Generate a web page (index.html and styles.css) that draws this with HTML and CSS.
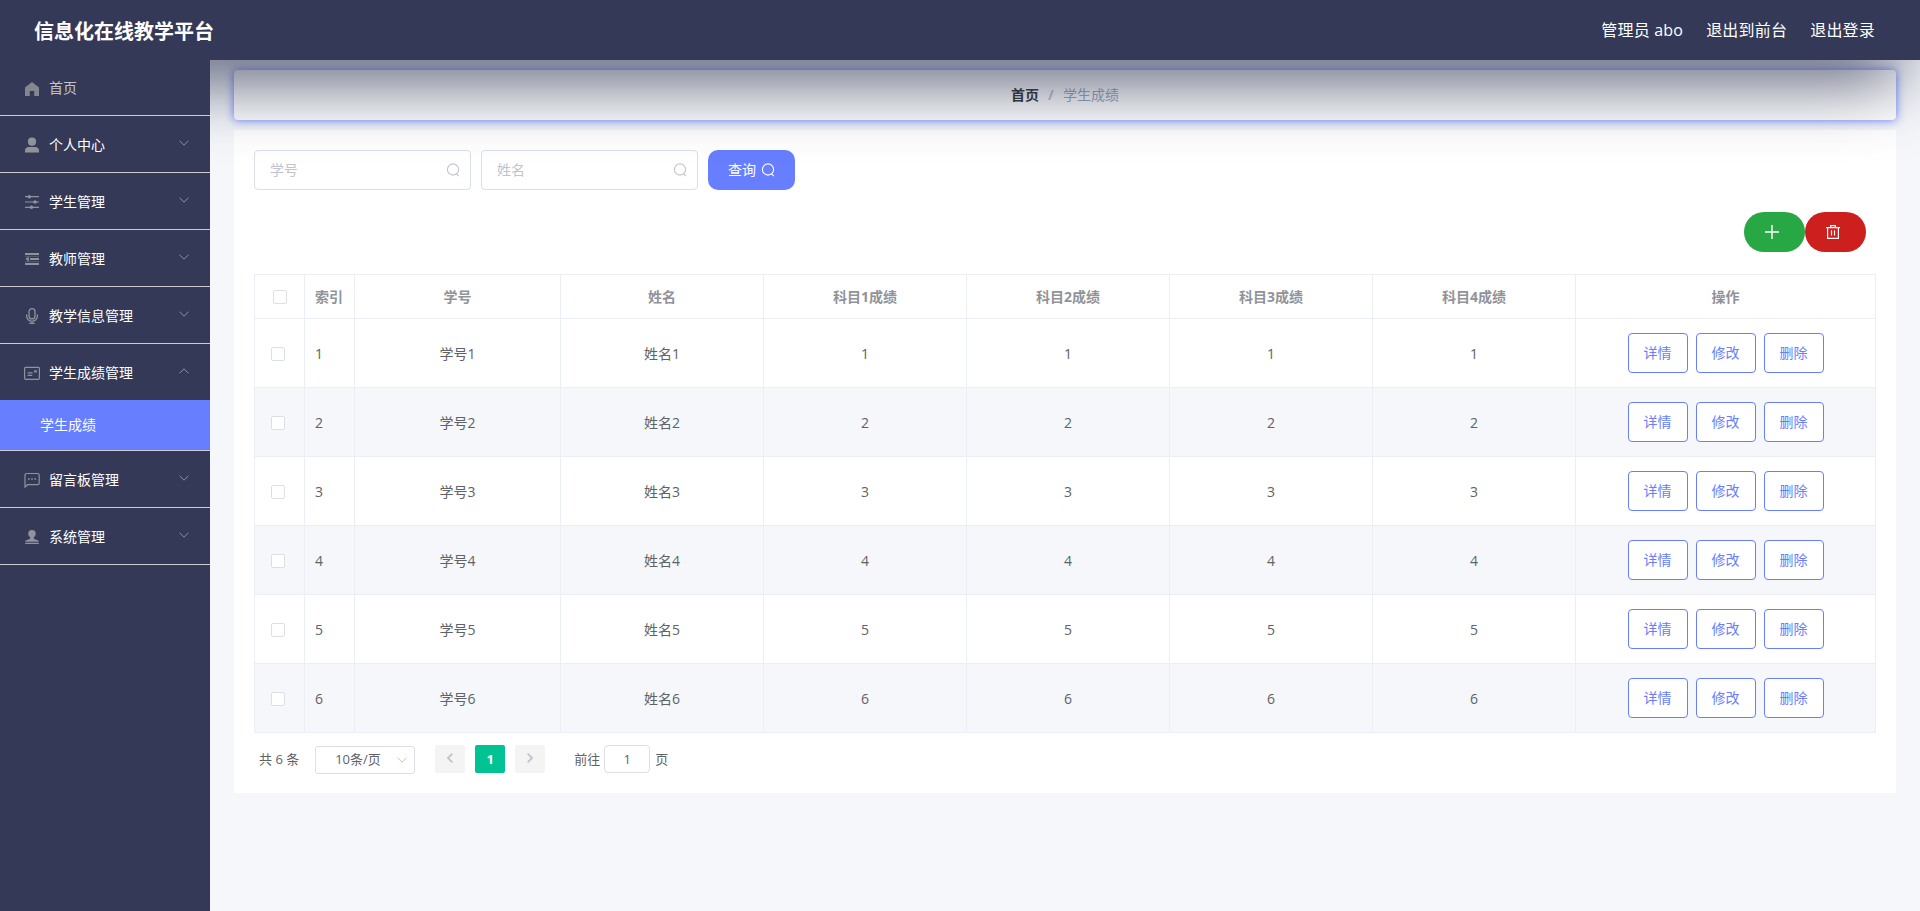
FILE: index.html
```html
<!DOCTYPE html>
<html lang="zh-CN">
<head>
  <meta charset="UTF-8" />
  <meta name="viewport" content="width=device-width, initial-scale=1.0"/>
  <title>信息化在线教学平台</title>
  <link rel="stylesheet" href="styles.css">
</head>
<body>

  <!-- 图标 -->
  <svg class="sprite" aria-hidden="true">
    <symbol id="i-home" viewBox="0 0 16 16"><path fill="currentColor" d="M8 1 1 6.600v8.400h4.800v-5h4.400v5H15V6.600z"/></symbol>
    <symbol id="i-user" viewBox="0 0 16 16"><circle cx="8" cy="4.700" r="4.100" fill="currentColor"/><path fill="currentColor" d="M1 15.600v-2.100c0-2.200 1.600-3.600 3.800-3.600h6.400c2.200 0 3.800 1.400 3.800 3.600v2.100z"/></symbol>
    <symbol id="i-slider" viewBox="0 0 16 16"><path stroke="currentColor" stroke-width="1.200" d="M1 2.700h14M1 8h14M1 13.300h14"/><g fill="currentColor"><circle cx="5.300" cy="2.700" r="1.800"/><circle cx="11" cy="8" r="1.800"/><circle cx="7.500" cy="13.300" r="1.800"/></g></symbol>
    <symbol id="i-fold" viewBox="0 0 16 16"><path stroke="currentColor" stroke-width="2" d="M1 3h14M6 8h9M1 13h14"/><path fill="currentColor" d="M1.400 8 4.800 5.600v4.800z"/><path stroke="currentColor" stroke-width=".8" d="M1 5.300h14M1 10.700h14" opacity=".5"/></symbol>
    <symbol id="i-mic" viewBox="0 0 16 16"><g fill="none" stroke="currentColor" stroke-width="1.300"><rect x="5" y=".7" width="6" height="10.200" rx="3"/><path d="M2.600 6.400v1.500a5.400 5.400 0 0 0 10.800 0V6.400M8 13.300v2M5.200 15.300h5.600"/></g></symbol>
    <symbol id="i-card" viewBox="0 0 16 16"><g fill="none" stroke="currentColor" stroke-width="1.200"><rect x=".6" y="2.300" width="14.800" height="12" rx="1"/><path d="M3.600 7.900h5M3.600 10.400h4.600"/></g><path fill="currentColor" d="M10.200 5.200h2.600v2.200h-2.600z"/></symbol>
    <symbol id="i-chat" viewBox="0 0 16 16"><path fill="none" stroke="currentColor" stroke-width="1.200" d="M1 15V3.200c0-1 .7-1.700 1.700-1.700h10.800c1 0 1.700.7 1.700 1.700v7.800c0 1-.7 1.700-1.700 1.700H3.600z"/><path stroke="currentColor" stroke-width="1.600" d="M4 7h1.600M7.200 7h1.600M10.400 7H12"/></symbol>
    <symbol id="i-custom" viewBox="0 0 16 16"><path fill="currentColor" d="M8 1a3.800 3.800 0 0 0-3.800 3.800c0 1.700 1 2.500 1.800 3.400.3.500.2 1.400-.2 1.700C4 10.500 1.200 10.700 1.200 12.800h13.600c0-2.100-2.800-2.300-4.600-2.900-.4-.3-.5-1.200-.2-1.700.8-.9 1.800-1.700 1.800-3.400A3.800 3.800 0 0 0 8 1zM1.200 13.700h13.600V15H1.200z"/></symbol>
    <symbol id="i-down" viewBox="0 0 12 12"><path fill="none" stroke="currentColor" d="M1.500 3.700 6 8.200l4.500-4.500"/></symbol>
    <symbol id="i-down-bold" viewBox="0 0 12 12"><path fill="none" stroke="currentColor" stroke-width="1.900" d="M1.700 3.700 6 8l4.300-4.300"/></symbol>
    <symbol id="i-search" viewBox="0 0 14 14"><circle cx="7" cy="6.500" r="5.600" fill="none" stroke="currentColor" stroke-width="1.100"/><path stroke="currentColor" stroke-width="1.100" d="m10.400 10.600 2.400 2.500"/></symbol>
    <symbol id="i-plus" viewBox="0 0 14 14"><path stroke="currentColor" stroke-width="1.400" d="M7 0v14M0 7h14"/></symbol>
    <symbol id="i-trash" viewBox="0 0 14 14"><path fill="none" stroke="currentColor" stroke-width="1.200" d="M0 2.600h14M1.600 2.600v10.800h10.800V2.600M4.600 2.600v-2h4.800v2M5.500 5.200v5.400M8.500 5.200v5.400"/></symbol>
  </svg>

  <header class="navbar">
    <div class="title">信息化在线教学平台</div>
    <div class="right-menu">
      <span>管理员 abo</span>
      <span>退出到前台</span>
      <span>退出登录</span>
    </div>
  </header>

  <div class="container">
    <ul class="sidebar">
      <li class="menu-item home"><svg class="icon"><use href="#i-home"/></svg><span>首页</span></li>
      <li class="menu-item"><svg class="icon"><use href="#i-user"/></svg><span>个人中心</span><svg class="arrow"><use href="#i-down"/></svg></li>
      <li class="menu-item"><svg class="icon"><use href="#i-slider"/></svg><span>学生管理</span><svg class="arrow"><use href="#i-down"/></svg></li>
      <li class="menu-item"><svg class="icon"><use href="#i-fold"/></svg><span>教师管理</span><svg class="arrow"><use href="#i-down"/></svg></li>
      <li class="menu-item"><svg class="icon"><use href="#i-mic"/></svg><span>教学信息管理</span><svg class="arrow"><use href="#i-down"/></svg></li>
      <li class="menu-item opened"><svg class="icon"><use href="#i-card"/></svg><span>学生成绩管理</span><svg class="arrow"><use href="#i-down"/></svg></li>
      <li class="sub-item">学生成绩</li>
      <li class="menu-item"><svg class="icon"><use href="#i-chat"/></svg><span>留言板管理</span><svg class="arrow"><use href="#i-down"/></svg></li>
      <li class="menu-item"><svg class="icon"><use href="#i-custom"/></svg><span>系统管理</span><svg class="arrow"><use href="#i-down"/></svg></li>
    </ul>

    <main class="main">
      <div class="breadcrumb"><b>首页</b><i>/</i><span>学生成绩</span></div>

      <div class="content">
        <div class="search-form">
          <div class="input"><span>学号</span><svg><use href="#i-search"/></svg></div>
          <div class="input"><span>姓名</span><svg><use href="#i-search"/></svg></div>
          <button class="btn-search"><span>查询</span><svg><use href="#i-search"/></svg></button>
        </div>

        <div class="actions">
          <button class="btn-round add"><svg><use href="#i-plus"/></svg></button>
          <button class="btn-round del"><svg><use href="#i-trash"/></svg></button>
        </div>

        <table class="table">
          <colgroup>
            <col class="c-check"><col class="c-index"><col class="c-no"><col class="c-name"><col class="c-score"><col class="c-score"><col class="c-score"><col class="c-score"><col>
          </colgroup>
          <thead>
            <tr><th><i class="checkbox"></i></th><th class="left">索引</th><th>学号</th><th>姓名</th><th>科目1成绩</th><th>科目2成绩</th><th>科目3成绩</th><th>科目4成绩</th><th>操作</th></tr>
          </thead>
          <tbody id="rows"></tbody>
        </table>

        <div class="pagination">
          <span class="total">共 6 条</span>
          <div class="select"><span>10条/页</span><svg><use href="#i-down"/></svg></div>
          <button class="page prev"><svg><use href="#i-down-bold"/></svg></button>
          <button class="page active">1</button>
          <button class="page next"><svg><use href="#i-down-bold"/></svg></button>
          <span class="jump">前往</span>
          <div class="jump-input">1</div>
          <span class="unit">页</span>
        </div>
      </div>
    </main>
  </div>

  <script>
    const rows = document.getElementById("rows");
    for (let i = 1; i <= 6; i++) {
      rows.innerHTML += `<tr>
        <td class="check"><i class="checkbox"></i></td>
        <td class="left">${i}</td>
        <td>学号${i}</td>
        <td>姓名${i}</td>
        <td>${i}</td><td>${i}</td><td>${i}</td><td>${i}</td>
        <td><div class="ops"><button>详情</button><button>修改</button><button>删除</button></div></td>
      </tr>`;
    }
  </script>
</body>
</html>
```
FILE: styles.css
```css
* {
  box-sizing: border-box;
}

body {
  margin: 0;
  height: 100vh;
  overflow: hidden;
  background: #f5f7fa;
  font-family: "Open Sans", "Noto Sans CJK SC", sans-serif;
  font-size: 14px;
  color: #606266;
}

button {
  font-family: inherit;
  font-size: 14px;
  padding: 0;
  border: none;
  cursor: pointer;
}

i {
  font-style: normal;
}

.sprite {
  position: absolute;
  width: 0;
  height: 0;
}

.navbar {
  position: relative;
  z-index: 2;
  height: 60px;
  padding: 0 45px 0 34px;
  display: flex;
  justify-content: space-between;
  align-items: center;
  background: #343957;
  color: #fff;
  box-shadow: -20px 16px 72px #343957;
}

.title {
  font-size: 20px;
  font-weight: 700;
}

.right-menu {
  display: flex;
  gap: 23px;
  padding-bottom: 2px;
  font-size: 16px;
  letter-spacing: 0.2px;
}

.container {
  display: flex;
  height: calc(100vh - 60px);
}

/* 左侧菜单 */
.sidebar {
  position: relative;
  z-index: 3;
  width: 210px;
  flex: none;
  margin: 0;
  padding: 0;
  list-style: none;
  background: #343957;
  color: #fff;
}

.menu-item {
  height: 57px;
  padding: 0 20px 0 24px;
  display: flex;
  align-items: center;
  border-bottom: 1px solid #ccc;
}

.menu-item.home {
  height: 56px;
  color: #c3c4cd;
}

.home span {
  padding-bottom: 2px;
}

.home .icon {
  color: #83868f;
}

.menu-item.opened {
  height: 56px;
  border-bottom: none;
}

.icon {
  width: 16px;
  height: 16px;
  margin: 2px 9px 0 0;
  color: #909399;
}

.arrow {
  width: 12px;
  height: 12px;
  margin: -3px 0 0 auto;
  color: #909399;
}

.opened .arrow {
  transform: rotate(180deg);
}

.sub-item {
  height: 51px;
  line-height: 50px;
  padding-left: 40px;
  background: #667eff;
  border-bottom: 1px solid #ccc;
}

/* 主体 */
.main {
  flex: 1;
  padding: 10px 24px 0;
}

.breadcrumb {
  height: 50px;
  padding-bottom: 2px;
  display: flex;
  justify-content: center;
  align-items: center;
  background: #fff;
  border-radius: 4px;
  box-shadow: 0 0 10px #667eff;
}

.breadcrumb b {
  color: #303133;
}

.breadcrumb i {
  margin: 0 9px;
  font-weight: 700;
  color: #c0c4cc;
}

.breadcrumb span {
  color: #97a8be;
}

.content {
  position: relative;
  margin-top: 10px;
  height: 663px;
  padding: 20px;
  background: #fff;
}

.search-form {
  display: flex;
  gap: 10px;
}

.input {
  width: 217px;
  height: 40px;
  padding: 0 10px 0 15px;
  display: flex;
  justify-content: space-between;
  align-items: center;
  border: 1px solid #dcdfe6;
  border-radius: 4px;
  color: #c0c4cc;
}

.input span,
.btn-search span {
  padding-bottom: 2px;
}

.search-form svg {
  width: 14px;
  height: 14px;
}

.btn-search {
  width: 87px;
  height: 40px;
  display: flex;
  justify-content: center;
  align-items: center;
  gap: 5px;
  border-radius: 10px;
  background: #667eff;
  color: #fff;
}

.actions {
  display: flex;
  justify-content: flex-end;
  margin-top: 22px;
  padding-right: 10px;
}

.btn-round {
  width: 61px;
  height: 40px;
  padding-right: 5px;
  display: flex;
  justify-content: center;
  align-items: center;
  border-radius: 20px;
  color: #fff;
}

.btn-round svg {
  width: 14px;
  height: 14px;
}

.add {
  background: #28a745;
}

.del {
  background: #ce1f1f;
}

/* 表格 */
.table {
  width: 1622px;
  margin-top: 22px;
  table-layout: fixed;
  border-collapse: separate;
  border-spacing: 0;
  border-top: 1px solid #ebeef5;
  border-left: 1px solid #ebeef5;
}

.c-check,
.c-index {
  width: 50px;
}

.c-no {
  width: 206px;
}

.c-name,
.c-score {
  width: 203px;
}

th,
td {
  padding: 0;
  text-align: center;
  border-right: 1px solid #ebeef5;
  border-bottom: 1px solid #ebeef5;
}

th {
  height: 44px;
  padding-bottom: 2px;
  color: #909399;
}

td {
  height: 69px;
}

th.left,
td.left {
  padding-left: 10px;
  text-align: left;
}

tbody tr:nth-child(even) {
  background: #f5f7fa;
}

.checkbox {
  display: inline-block;
  width: 14px;
  height: 14px;
  vertical-align: middle;
  border: 1px solid #dcdfe6;
  border-radius: 2px;
  background: #fff;
}

.check {
  padding: 0 3px 2px 0;
}

.ops {
  display: flex;
  justify-content: center;
  gap: 8px;
}

.ops button {
  width: 60px;
  height: 40px;
  padding-bottom: 2px;
  border: 1px solid #667eff;
  border-radius: 4px;
  background: #fff;
  color: #667eff;
}

/* 分页 */
.pagination {
  display: flex;
  align-items: center;
  height: 28px;
  margin-top: 12px;
  padding-left: 5px;
  font-size: 13px;
}

.total,
.jump,
.unit {
  padding-bottom: 2px;
}

.select span {
  padding-bottom: 3px;
}

.select {
  width: 100px;
  height: 28px;
  margin: 2px 20px 0 16px;
  padding: 0 6px 0 19px;
  display: flex;
  align-items: center;
  justify-content: space-between;
  border: 1px solid #dcdfe6;
  border-radius: 3px;
}

.pagination svg {
  width: 12px;
  height: 12px;
  color: #c0c4cc;
}

.page {
  width: 30px;
  height: 28px;
  margin-right: 10px;
  border-radius: 2px;
  background: #f4f4f5;
  font-size: 13px;
  font-weight: 700;
}

.page.active {
  background: #00c292;
  color: #fff;
}

.prev svg {
  transform: rotate(90deg);
}

.next svg {
  transform: rotate(-90deg);
}

.jump {
  margin-left: 19px;
}

.jump-input {
  width: 46px;
  height: 28px;
  margin: 0 5px 0 4px;
  line-height: 26px;
  text-align: center;
  border: 1px solid #dcdfe6;
  border-radius: 4px;
}
```
